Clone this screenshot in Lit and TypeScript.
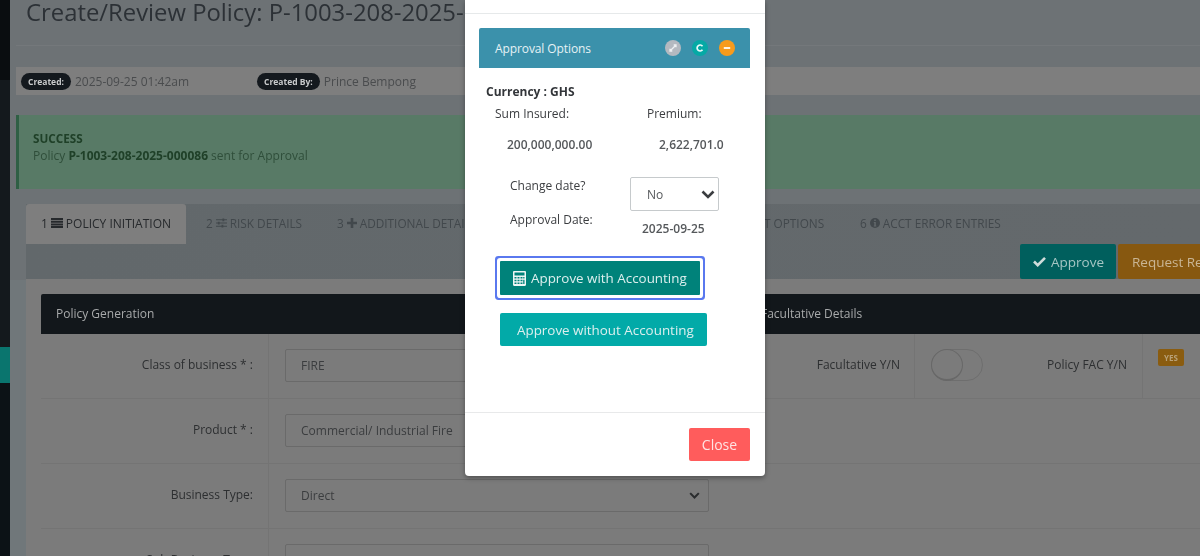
import { LitElement, html, css } from "lit";
import { customElement } from "lit/decorators.js";

const chevron = html`<svg class="chev" viewBox="0 0 14 9" width="14" height="9"><path d="M1.500 1.500 7 7l5.500-5.500" fill="none" stroke="currentColor" stroke-width="2.600"/></svg>`;

const barsIcon = html`<svg class="ti" viewBox="0 0 12 10" width="12" height="10"><path d="M0 0h12v2H0zM0 2.700h12v2H0zM0 5.400h12v2H0zM0 8h12v2H0z" fill="currentColor"/></svg>`;
const slidersIcon = html`<svg class="ti" viewBox="0 0 12 10" width="11" height="10"><path d="M0 1h7v1H0zM9 1h3v1H9zM7 0h2v3H7zM0 4.500h2v1H0zM4 4.500h8v1H4zM2 3.500h2v3H2zM0 8h6v1H0zM8 8h4v1H8zM6 7h2v3H6z" fill="currentColor"/></svg>`;
const plusIcon = html`<svg class="ti" viewBox="0 0 10 10" width="10" height="10"><path d="M3.700 0h2.600v3.700H10v2.600H6.300V10H3.700V6.300H0V3.700h3.700z" fill="currentColor"/></svg>`;
const infoIcon = html`<svg class="ti" viewBox="0 0 10 10" width="10" height="10"><circle cx="5" cy="5" r="5" fill="currentColor"/><path d="M4.200 1.600h1.600v1.400H4.200zM3.800 4h2v3.400h.5v1H3.800v-1h.5V5h-.5z" fill="#62686b"/></svg>`;
const calcIcon = html`<svg viewBox="0 0 13 15" width="13" height="15"><path fill-rule="evenodd" d="M1.200 0h10.600C12.500 0 13 .5 13 1.200v12.600c0 .7-.5 1.200-1.200 1.200H1.200C.5 15 0 14.500 0 13.800V1.200C0 .5.500 0 1.200 0zM1.500 1.500v3h10v-3zM1.500 6v1.500h2V6zM4.500 6v1.500h2V6zM7.500 6v1.500h2V6zM10.200 6v1.500h1.300V6zM1.500 8.700v1.500h2V8.700zM4.500 8.700v1.500h2V8.700zM7.500 8.700v1.500h2V8.700zM10.200 8.700v4.300h1.300V8.700zM1.500 11.500V13h2v-1.500zM4.500 11.500V13h2v-1.500zM7.500 11.500V13h2v-1.500z" fill="#eef6f5"/></svg>`;

@customElement("app-root")
export class AppRoot extends LitElement {
  static styles = css`
    :host {
      display: block;
      width: 1200px;
      height: 556px;
      position: relative;
      overflow: hidden;
      font-family: "Open Sans", "Noto Sans", sans-serif;
      font-size: 12px;
      color: #333;
    }
    .shell {
      display: flex;
      height: 556px;
      background: #6d7275;
      filter: blur(0.7px);
    }
    .side {
      width: 10px;
      flex: none;
      background: #0d1215;
      display: flex;
      flex-direction: column;
    }
    .side-a { height: 80px; background: #0a0d10; }
    .side-b { height: 267px; background: #14191d; }
    .side-c { height: 36px; background: #0a756e; }
    .side-d { flex: 1; background: #0c1216; }
    .main {
      flex: 1;
      min-width: 0;
      display: flex;
      flex-direction: column;
      background: linear-gradient(#6d7275, #6d7275 280px, #70777a 280px);
      padding: 0 0 0 6px;
      overflow: hidden;
    }
    .head { padding-left: 10px; height: 45px; border-bottom: 1px solid #74787b; }
    h1 {
      margin: 0;
      font-size: 23.850px;
      line-height: 24px;
      font-weight: 400;
      color: #2c3136;
      white-space: nowrap;
    }
    .meta {
      margin-top: 21px;
      height: 28px;
      background: #7e7e7e;
      display: flex;
      align-items: center;
      padding-left: 5px;
      color: #4a4c4e;
      font-size: 12px;
      white-space: nowrap;
    }
    .pill {
      background: #14191e;
      color: #c9cbcc;
      font-size: 8.500px;
      font-weight: 700;
      border-radius: 9px;
      padding: 2px 7px;
      height: 17px;
      line-height: 13px;
      box-sizing: border-box;
      margin-right: 4px;
    }
    .meta .gap { width: 68px; }
    .alert {
      margin-top: 20px;
      height: 74px;
      box-sizing: border-box;
      background: #587a66;
      border-left: 3px solid #2f5f44;
      padding: 14px 0 0 14px;
      color: #1f4028;
      font-size: 12px;
      line-height: 18px;
    }
    .alert b { font-weight: 700; }
    .alert .head-line { font-size: 11.700px; }
    .alert .sub { color: #2f4e3a; }
    .alert .sub b { color: #1f4028; }
    .work {
      margin: 15px 0 0 10px;
      display: flex;
      flex-direction: column;
      flex: 1;
      min-height: 0;
    }
    .tabbar {
      background: linear-gradient(90deg, #62686b, #64696c);
      height: 75px;
      display: flex;
      flex-direction: column;
      justify-content: space-between;
    }
    .tabs { display: flex; height: 40px; color: #42484c; font-size: 11.800px; white-space: nowrap; }
    .tab { display: flex; align-items: center; gap: 3px; padding-bottom: 2px; box-sizing: border-box; }
    .tab.active {
      width: 160px;
      justify-content: center;
      background: #7e7e7e;
      color: #26292c;
      border-radius: 3px 3px 0 0;
      font-size: 12px;
    }
    .tab.t2 { margin-left: 20px; width: 127px; }
    .tab.t3 { margin-left: 4px; width: 427px; }
    .tab.t5 { width: 96px; }
    .actions { display: flex; height: 35px; padding-left: 994px; gap: 2px; color: #a5c6c4; font-size: 13.500px; white-space: nowrap; }
    .act { border-radius: 2px; display: flex; align-items: center; gap: 5px; padding-left: 14px; flex: none; }
    .act.ok { width: 96px; padding-left: 13px; box-sizing: border-box; background: #005f5d; }
    .act.req { width: 120px; background: #875810; color: #c9b594; }
    .content {
      flex: 1;
      background: #7b7b7b;
      padding: 15px 0 0 15px;
      display: flex;
      flex-direction: column;
    }
    .dark {
      height: 40px;
      background: #12171b;
      color: #a8aaab;
      font-size: 12px;
      line-height: 39px;
      padding-left: 15px;
      border-radius: 2px 0 0 0;
      display: grid;
      grid-template-columns: 705px 1fr;
      flex: none;
    }
    .row {
      height: 64px;
      flex: none;
      border-bottom: 1px solid #747474;
      display: grid;
      grid-template-columns: 212px 16px 16px 424px 191px 15px 16px 52px 144px 16px 15px 26px;
      color: #2d2f31;
    }
    .row.short { grid-template-columns: 212px 16px 16px 424px; }
    .lab { text-align: right; padding-top: 22px; font-size: 12px; line-height: 17px; white-space: nowrap; }
    .vline { border-right: 1px solid #747474; }
    .input {
      grid-column: 4;
      margin-top: 15px;
      height: 33px;
      box-sizing: border-box;
      border: 1px solid #6a6a6a;
      border-radius: 2px;
      padding: 0 15px;
      display: flex;
      align-items: center;
      justify-content: space-between;
      color: #3b3d3f;
      font-size: 12px;
    }
    .input .chev { color: #2a2c2e; width: 11px; margin-right: -7px; }
    .flab { grid-column: 5; }
    .toggle {
      grid-column: 8;
      margin-top: 15px;
      width: 52px;
      height: 32px;
      border: 1px solid #6e6e6e;
      border-radius: 16px;
      box-sizing: border-box;
      position: relative;
    }
    .toggle::after {
      content: "";
      position: absolute;
      left: -1px;
      top: -1px;
      width: 32px;
      height: 32px;
      box-sizing: border-box;
      border-radius: 50%;
      background: #7b7b7b;
      border: 1px solid #686868;
      border-bottom-width: 2px;
    }
    .plab { grid-column: 9; }
    .yes {
      grid-column: 12;
      margin-top: 15px;
      height: 17px;
      background: #8a5c10;
      border-radius: 2px;
      color: #b9a178;
      font-size: 8px;
      font-weight: 700;
      text-align: center;
      line-height: 17px;
    }
    .modal {
      position: absolute;
      left: 465px;
      top: 0;
      width: 300px;
      height: 476px;
      box-sizing: border-box;
      background: #fff;
      border-radius: 0 0 4px 4px;
      display: flex;
      flex-direction: column;
      color: #3b3d40;
      filter: blur(0.6px);
      box-shadow: 0 2px 5px rgba(0,0,0,.35);
    }
    .m-top { height: 13px; border-bottom: 1px solid #e6e9ea; flex: none; }
    .m-body { flex: 1; padding: 14px 15px 0 14px; min-height: 0; }
    .m-head {
      height: 40px;
      background: #3b91ab;
      border-radius: 2px 2px 0 0;
      display: flex;
      align-items: center;
      padding: 0 15px 0 16px;
      color: #e6f2f5;
      font-size: 12px;
      letter-spacing: -0.1px;
    }
    .m-head .t { flex: 1; }
    .dots { display: flex; gap: 11px; }
    .dot { width: 16px; height: 16px; border-radius: 50%; display: flex; align-items: center; justify-content: center; }
    .dot.a { background: #b4b9c0; }
    .dot.b { background: #05a9a5; }
    .dot.c { background: #f79b1c; }
    .cur { margin: 16px 0 0 7px; font-weight: 700; font-size: 12px; line-height: 16px; color: #33363a; }
    .amt { display: grid; grid-template-columns: 152px 1fr; padding-left: 16px; margin-top: 5px; font-size: 12px; line-height: 17px; white-space: nowrap; }
    .amt .v { padding: 14px 0 0 12px; font-weight: 600; color: #55585b; }
    .chg { display: grid; grid-template-columns: 120px 89px; padding-left: 31px; margin-top: 24px; }
    .chg .l { line-height: 17px; font-size: 12px; }
    .sel {
      height: 34px;
      box-sizing: border-box;
      border: 1px solid #c6cacc;
      border-radius: 2px;
      display: flex;
      align-items: center;
      justify-content: space-between;
      padding: 0 3px 0 16px;
      color: #55585b;
    }
    .sel .chev { color: #3b3d40; }
    .chg .d { font-weight: 600; color: #55585b; padding: 9px 0 0 12px; line-height: 17px; white-space: nowrap; }
    .btns { display: flex; flex-direction: column; align-items: flex-start; padding-left: 21px; margin-top: 24px; }
    .btn {
      border: 0;
      font: inherit;
      font-size: 13.400px;
      color: #dcefee;
      height: 34px;
      border-radius: 2px;
      display: flex;
      align-items: center;
      white-space: nowrap;
      padding: 0;
    }
    .b1 {
      width: 200px;
      background: #00827a;
      gap: 5px;
      padding-left: 13px;
      box-shadow: 0 0 0 3px #fff, 0 0 0 5px #5a78ef;
      border-radius: 1px;
    }
    .b2 { width: 207px; background: #02aaa8; margin-top: 18px; height: 33px; padding-left: 17px; }
    .m-foot {
      height: 64px;
      flex: none;
      border-top: 1px solid #e8e9ea;
      display: flex;
      justify-content: flex-end;
      padding: 15px 15px 0 0;
      box-sizing: border-box;
    }
    .close {
      width: 61px;
      height: 33px;
      background: #ff5c5c;
      color: #ffe3e3;
      border: 0;
      border-radius: 2px;
      font: inherit;
      font-size: 14px;
      padding: 0;
    }
  `;

  render() {
    return html`
      <div class="shell">
        <div class="side">
          <div class="side-a"></div><div class="side-b"></div><div class="side-c"></div><div class="side-d"></div>
        </div>
        <div class="main">
          <div class="head"><h1>Create/Review Policy: P-1003-208-2025-000086</h1></div>
          <div class="meta">
            <span class="pill">Created:</span><span>2025-09-25 01:42am</span>
            <span class="gap"></span>
            <span class="pill">Created By:</span><span>Prince Bempong</span>
          </div>
          <div class="alert">
            <div class="head-line"><b>SUCCESS</b></div>
            <div class="sub">Policy <b>P-1003-208-2025-000086</b> sent for Approval</div>
          </div>
          <div class="work">
            <div class="tabbar">
              <div class="tabs">
                <div class="tab active">1 ${barsIcon} POLICY INITIATION</div>
                <div class="tab t2">2 ${slidersIcon} RISK DETAILS</div>
                <div class="tab t3">3 ${plusIcon} ADDITIONAL DETAILS</div>
                <div class="tab t5">T OPTIONS</div>
                <div class="tab">6 ${infoIcon} ACCT ERROR ENTRIES</div>
              </div>
              <div class="actions">
                <div class="act ok"><svg viewBox="0 0 13 11" width="13" height="11"><path d="M1 5.500 4.700 9.200 12 1.800" fill="none" stroke="#cfdcdb" stroke-width="2.600"/></svg>Approve</div>
                <div class="act req">Request Re</div>
              </div>
            </div>
            <div class="content">
              <div class="dark"><span>Policy Generation</span><span>Facultative Details</span></div>
              <div class="row">
                <div class="lab">Class of business * :</div><div class="vline"></div>
                <div class="input">FIRE</div>
                <div class="lab flab">Facultative Y/N</div><div class="vline"></div>
                <div class="toggle"></div>
                <div class="lab plab">Policy FAC Y/N</div><div class="vline"></div>
                <div class="yes">YES</div>
              </div>
              <div class="row short">
                <div class="lab">Product * :</div><div class="vline"></div>
                <div class="input">Commercial/ Industrial Fire</div>
              </div>
              <div class="row short">
                <div class="lab">Business Type:</div><div class="vline"></div>
                <div class="input">Direct ${chevron}</div>
              </div>
              <div class="row short">
                <div class="lab">Sub Business Type:</div><div class="vline"></div>
                <div class="input"></div>
              </div>
            </div>
          </div>
        </div>
      </div>
      <div class="modal">
        <div class="m-top"></div>
        <div class="m-body">
          <div class="m-head">
            <span class="t">Approval Options</span>
            <div class="dots">
              <span class="dot a"><svg viewBox="0 0 10 10" width="10" height="10"><path d="M2.500 7.500 7.500 2.500M5.700 2h2.300v2.300M2 5.700V8h2.300" fill="none" stroke="#eef0f2" stroke-width="1.300"/></svg></span>
              <span class="dot b"><svg viewBox="0 0 10 10" width="10" height="10"><path d="M7.500 3.200A3 3 0 1 0 7.500 6.800" fill="none" stroke="#eafafa" stroke-width="1.700"/></svg></span>
              <span class="dot c"><svg viewBox="0 0 10 10" width="10" height="10"><path d="M1.800 4h6.400v2H1.800z" fill="#fdf3e3"/></svg></span>
            </div>
          </div>
          <div class="cur">Currency : GHS</div>
          <div class="amt">
            <span>Sum Insured:</span><span>Premium:</span>
            <span class="v">200,000,000.00</span><span class="v">2,622,701.0</span>
          </div>
          <div class="chg">
            <span class="l">Change date?</span>
            <div class="sel">No ${chevron}</div>
            <span class="l">Approval Date:</span>
            <span class="d">2025-09-25</span>
          </div>
          <div class="btns">
            <button class="btn b1">${calcIcon}Approve with Accounting</button>
            <button class="btn b2">Approve without Accounting</button>
          </div>
        </div>
        <div class="m-foot"><button class="close">Close</button></div>
      </div>
    `;
  }
}
